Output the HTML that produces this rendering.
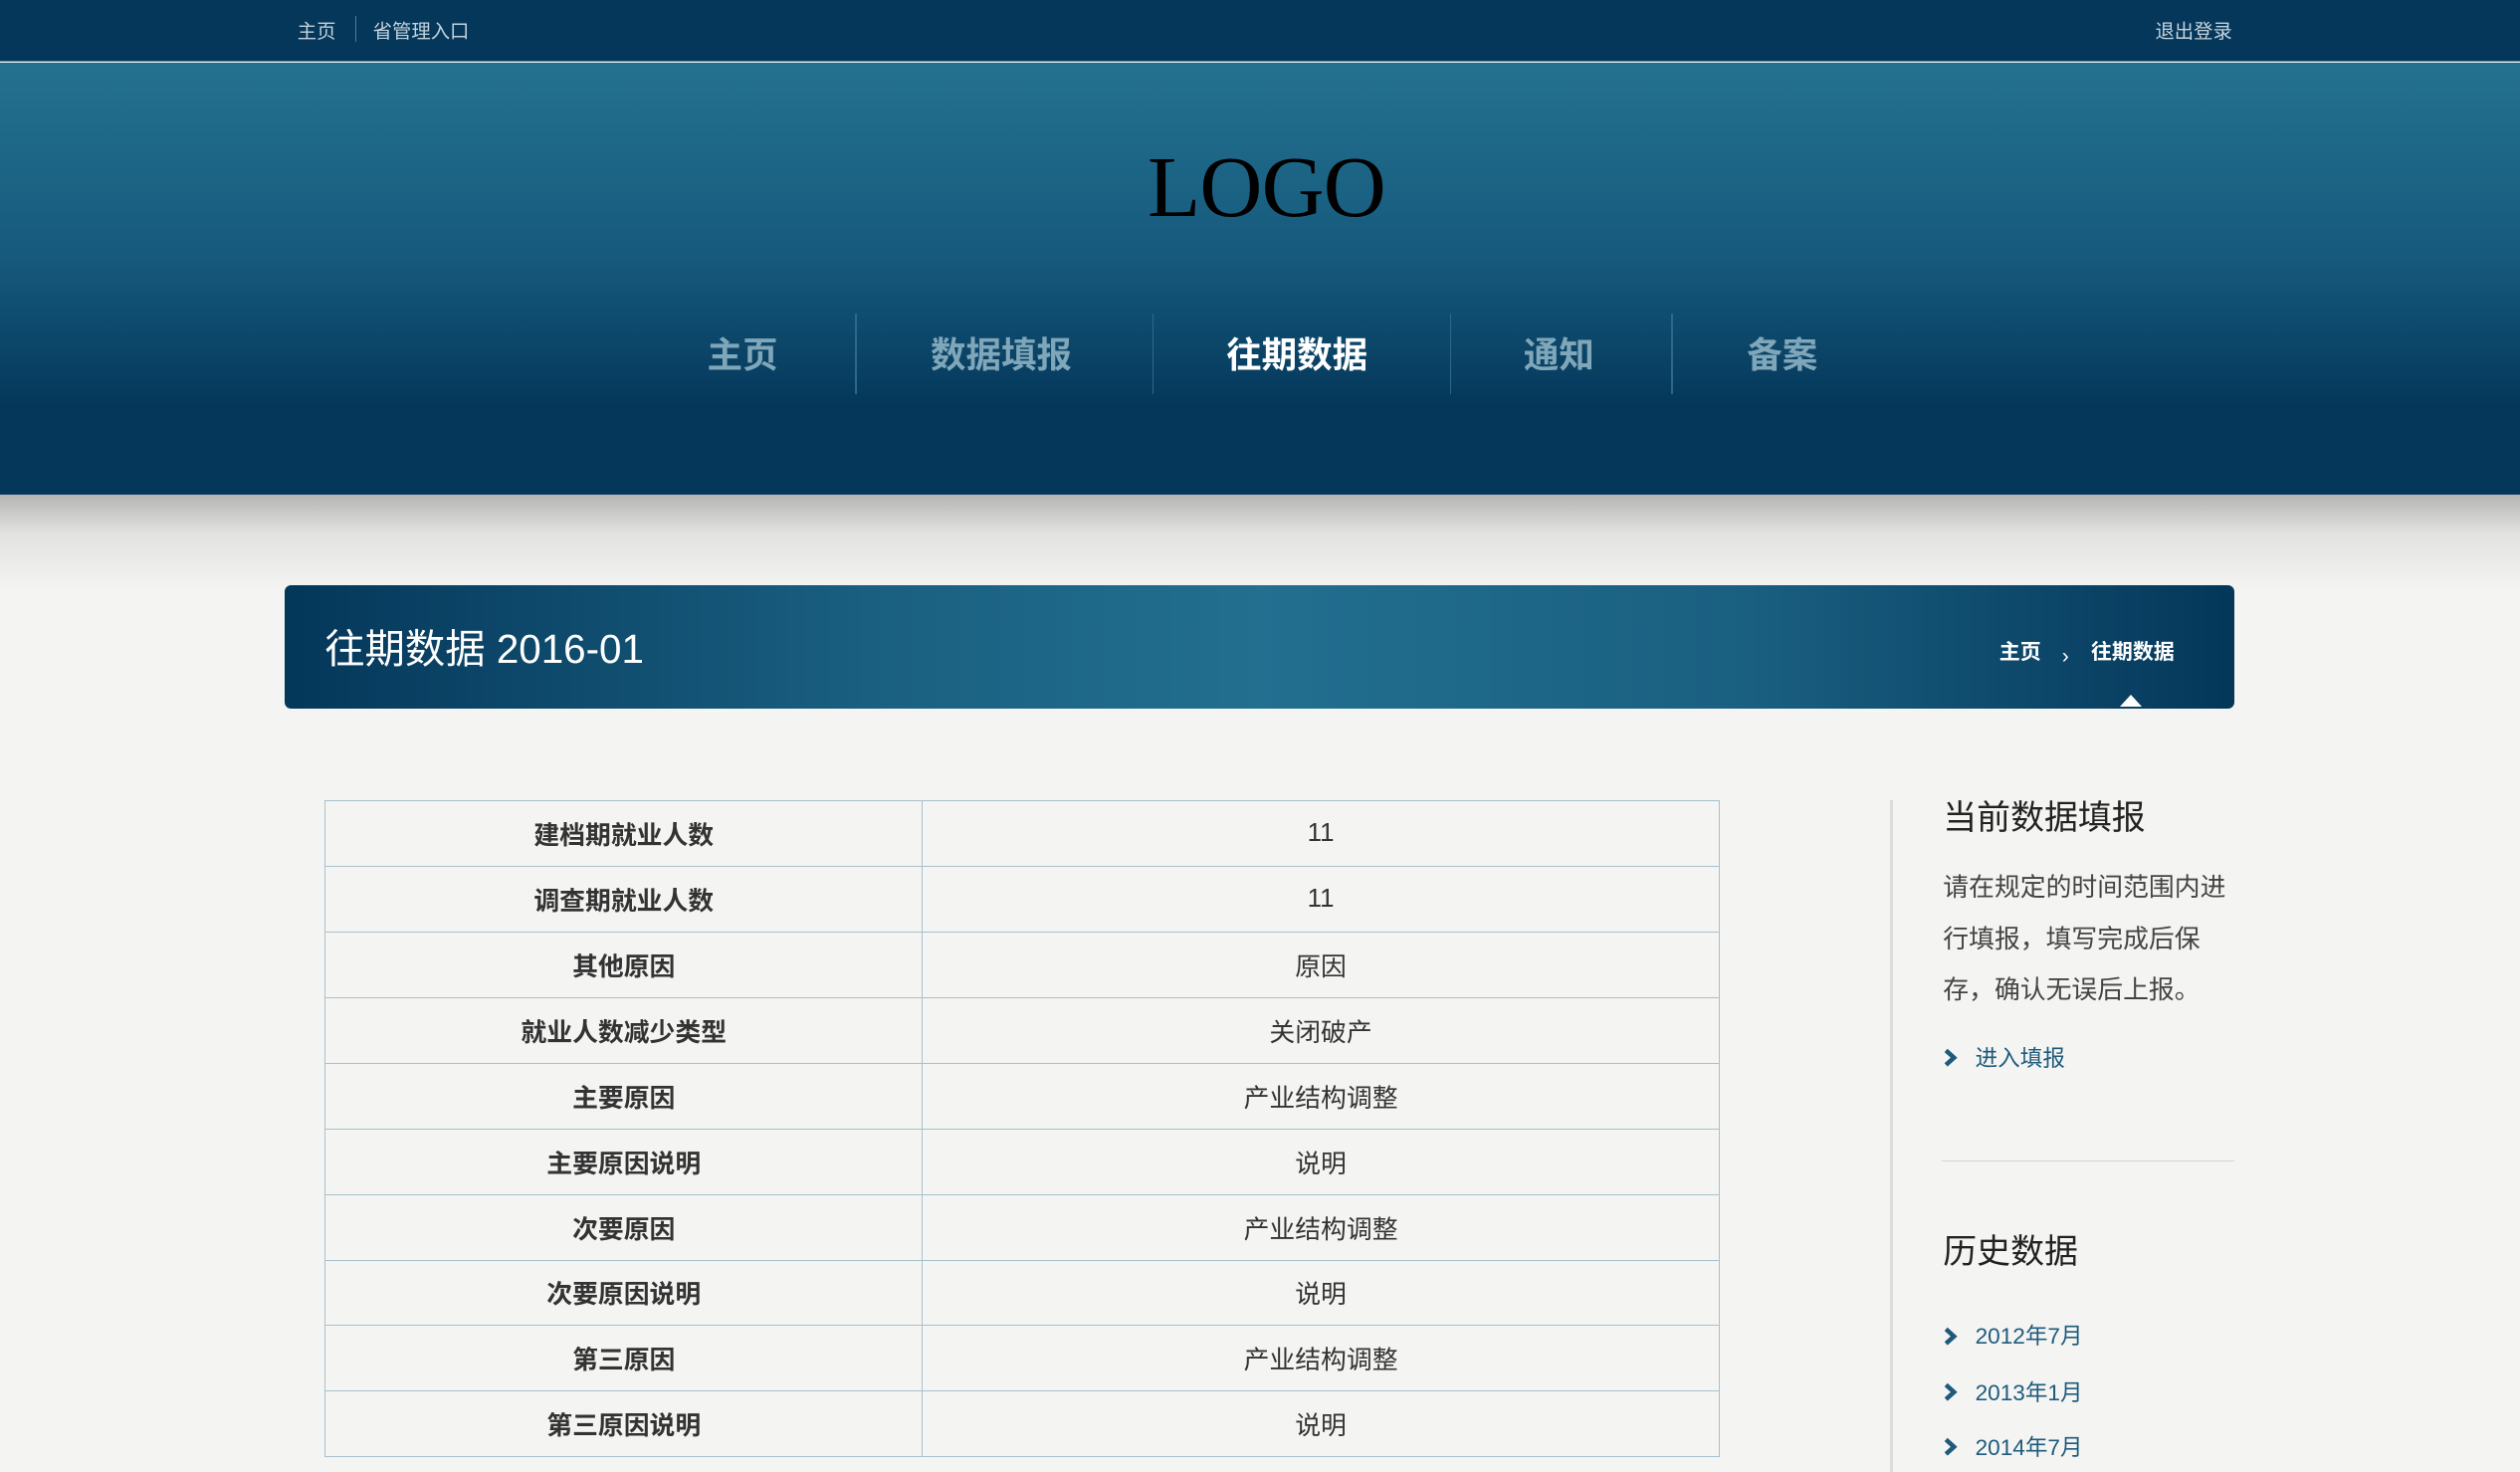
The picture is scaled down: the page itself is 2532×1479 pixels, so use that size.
<!DOCTYPE html>
<html><head><meta charset="utf-8"><style>
html,body{margin:0;padding:0;background:#f4f4f2;overflow:hidden}
body{width:1568px;height:916px;zoom:1.61480;position:relative;font-family:"Liberation Sans","Noto Sans CJK SC",sans-serif}
.a{position:absolute}
#top{left:0;top:0;width:1568px;height:38px;background:#04375a;border-bottom:1px solid #4a8aa8}
#top span{position:absolute;top:10px;font-size:12px;color:#c5d3dc}
#hdr{left:0;top:39px;width:1568px;height:269px;background:linear-gradient(#24718f 0%,#165a7d 45%,#04375a 80%,#04375a 100%)}
#sh{left:0;top:308px;width:1568px;height:60px;background:linear-gradient(#b5b5b5,#e2e2e0 40%,#f4f4f2)}
#logo{left:0;width:1568px;top:84px;text-align:center;font-family:"Liberation Serif",serif;font-size:54px;color:#000;letter-spacing:-0.5px;line-height:64px;padding-left:4px}
.nav{top:206px;font-size:22px;font-weight:bold;color:#7fa6b9;line-height:30px}
.sep{top:195px;width:1px;height:50px;background:#2a6a88}
#tb{left:177px;top:364px;width:1213px;height:77px;border-radius:4px;background:linear-gradient(90deg,#04375a,#1a5f80 30%,#226f90 50%,#1a5f80 75%,#04375a)}
table{position:absolute;left:202px;top:498px;width:868px;border-collapse:collapse;font-size:16px;color:#333}
td{border:1px solid #a8c0cc;height:40.2px;padding:0;text-align:center}
td:first-child{width:371px;font-weight:bold}
.side{left:1209px;color:#222}
.lk{left:1209px;font-size:14px;color:#1e5a7c;line-height:20px}
.lk svg{position:relative;top:1px;margin-right:10px}
</style></head><body>
<div id="top" class="a">
<span style="left:185px">主页</span><span style="left:221px;top:10px;width:1px;height:16px;background:#567a92"></span><span style="left:232px">省管理入口</span>
<span style="left:1341px">退出登录</span></div>
<div id="hdr" class="a"></div>
<div id="sh" class="a"></div>
<div id="logo" class="a">LOGO</div>
<div class="a nav" style="left:440px">主页</div>
<div class="a sep" style="left:532px"></div>
<div class="a nav" style="left:579px">数据填报</div>
<div class="a sep" style="left:717px"></div>
<div class="a nav" style="left:763px;color:#fff">往期数据</div>
<div class="a sep" style="left:902px"></div>
<div class="a nav" style="left:948px">通知</div>
<div class="a sep" style="left:1040px"></div>
<div class="a nav" style="left:1087px">备案</div>
<div id="tb" class="a"></div>
<div class="a" style="left:202px;top:388px;font-size:25px;color:#fff;line-height:32px">往期数据 2016-01</div>
<div class="a" style="left:1244px;top:396px;font-size:13px;font-weight:bold;color:#fff">主页</div>
<div class="a" style="left:1283px;top:401px;font-size:13px;color:#fff">›</div>
<div class="a" style="left:1301px;top:396px;font-size:13px;font-weight:bold;color:#fff">往期数据</div>
<div class="a" style="left:1319px;top:432px;width:0;height:0;border-left:7px solid transparent;border-right:7px solid transparent;border-bottom:8px solid #fff"></div>
<table>
<tr><td>建档期就业人数</td><td>11</td></tr>
<tr><td>调查期就业人数</td><td>11</td></tr>
<tr><td>其他原因</td><td>原因</td></tr>
<tr><td>就业人数减少类型</td><td>关闭破产</td></tr>
<tr><td>主要原因</td><td>产业结构调整</td></tr>
<tr><td>主要原因说明</td><td>说明</td></tr>
<tr><td>次要原因</td><td>产业结构调整</td></tr>
<tr><td>次要原因说明</td><td>说明</td></tr>
<tr><td>第三原因</td><td>产业结构调整</td></tr>
<tr><td>第三原因说明</td><td>说明</td></tr>
</table>
<div class="a" style="left:1176px;top:498px;width:2px;height:418px;background:#dcdcdc"></div>
<div class="a side" style="top:494px;font-size:21px;line-height:30px">当前数据填报</div>
<div class="a side" style="top:537px;width:200px;font-size:16px;line-height:32px;color:#444">请在规定的时间范围内进<br>行填报，填写完成后保<br>存，确认无误后上报。</div>
<div class="a lk" style="top:649px"><svg width="10" height="12" viewBox="0 0 10 12"><path d="M2 1.5 L7 6 L2 10.5" fill="none" stroke="#1e5a7c" stroke-width="2.8"/></svg>进入填报</div>
<div class="a" style="left:1208px;top:722px;width:182px;height:1px;background:#d4d4d4"></div>
<div class="a side" style="top:764px;font-size:21px;line-height:30px">历史数据</div>
<div class="a lk" style="top:822px"><svg width="10" height="12" viewBox="0 0 10 12"><path d="M2 1.5 L7 6 L2 10.5" fill="none" stroke="#1e5a7c" stroke-width="2.8"/></svg>2012年7月</div>
<div class="a lk" style="top:857px"><svg width="10" height="12" viewBox="0 0 10 12"><path d="M2 1.5 L7 6 L2 10.5" fill="none" stroke="#1e5a7c" stroke-width="2.8"/></svg>2013年1月</div>
<div class="a lk" style="top:891px"><svg width="10" height="12" viewBox="0 0 10 12"><path d="M2 1.5 L7 6 L2 10.5" fill="none" stroke="#1e5a7c" stroke-width="2.8"/></svg>2014年7月</div>
</body></html>
